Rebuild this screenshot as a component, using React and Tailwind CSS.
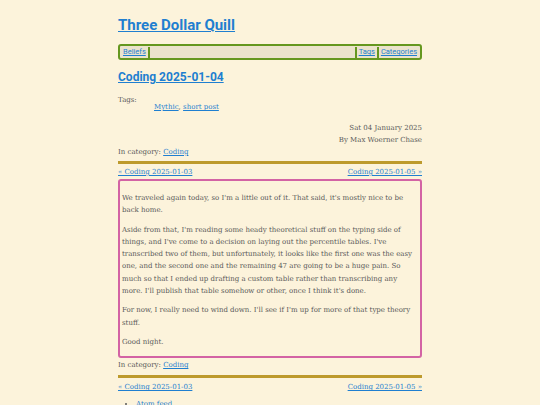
export default function App() {
  const link = "text-[#1f7fd0] underline";
  const bar = <span className="h-[11px] border-l-2 border-[#65971f]"></span>;
  return (
    <div className="min-h-[405px] bg-[#fcf3db] text-[#595959] font-['DejaVu_Serif',serif]">
      <div className="mx-auto w-[304px] pt-[14px]">
        <h1 className="font-['Roboto',sans-serif] text-[15px] font-bold leading-[22px]">
          <a href="#" className={link}>Three Dollar Quill</a>
        </h1>
        <nav className="mt-[8px] flex h-[16px] items-center rounded-[3px] border-2 border-[#65971f] bg-[#ebe3cc] px-[1px] font-['Roboto',sans-serif] text-[7.5px]">
          <a href="#" className={link + " px-[2px]"}>Beliefs</a>
          {bar}
          <span className="flex-1"></span>
          {bar}
          <a href="#" className={link + " px-[2px]"}>Tags</a>
          {bar}
          <a href="#" className={link + " px-[2px]"}>Categories</a>
        </nav>
        <h2 className="mt-[8px] font-['Roboto',sans-serif] text-[12px] font-bold leading-[18px]">
          <a href="#" className={link}>Coding 2025-01-04</a>
        </h2>
        <div className="mt-[8px] text-[7px] leading-[12px]">
          <div>Tags:</div>
          <div className="-mt-[5px] pl-[36px]">
            <a href="#" className={link}>Mythic</a>, <a href="#" className={link}>short post</a>
          </div>
        </div>
        <div className="mt-[9px] text-right text-[7px] leading-[12px]">
          <div>Sat 04 January 2025</div>
          <div>By Max Woerner Chase</div>
        </div>
        <div className="text-[7px] leading-[12px]">
          In category: <a href="#" className={link}>Coding</a>
        </div>
        <div className="mt-[3px] h-[3px] bg-[#bd9a2c]"></div>
        <div className="mt-[2px] flex justify-between text-[7px] leading-[12px]">
          <a href="#" className={link}>« Coding 2025-01-03</a>
          <a href="#" className={link}>Coding 2025-01-05 »</a>
        </div>
        <article className="mt-[1px] rounded-[3px] border-2 border-[#d363a4] pl-[2px] pr-[3px] pt-[11px] pb-[8px] text-[7px] leading-[12.3px]">
          <p>We traveled again today, so I'm a little out of it. That said, it's mostly nice to be back home.</p>
          <p className="mt-[7px]">Aside from that, I'm reading some heady theoretical stuff on the typing side of things, and I've come to a decision on laying out the percentile tables. I've transcribed two of them, but unfortunately, it looks like the first one was the easy one, and the second one and the remaining 47 are going to be a huge pain. So much so that I ended up drafting a custom table rather than transcribing any more. I'll publish that table somehow or other, once I think it's done.</p>
          <p className="mt-[7px]">For now, I really need to wind down. I'll see if I'm up for more of that type theory stuff.</p>
          <p className="mt-[7px]">Good night.</p>
        </article>
        <div className="mt-[1px] text-[7px] leading-[12px]">
          In category: <a href="#" className={link}>Coding</a>
        </div>
        <div className="mt-[4px] h-[3px] bg-[#bd9a2c]"></div>
        <div className="mt-[3px] flex justify-between text-[7px] leading-[12px]">
          <a href="#" className={link}>« Coding 2025-01-03</a>
          <a href="#" className={link}>Coding 2025-01-05 »</a>
        </div>
        <ul className="mt-[5px] list-disc pl-[18px] text-[7px] leading-[12px] marker:text-[#595959]">
          <li><a href="#" className={link}>Atom feed</a></li>
        </ul>
      </div>
    </div>
  );
}
